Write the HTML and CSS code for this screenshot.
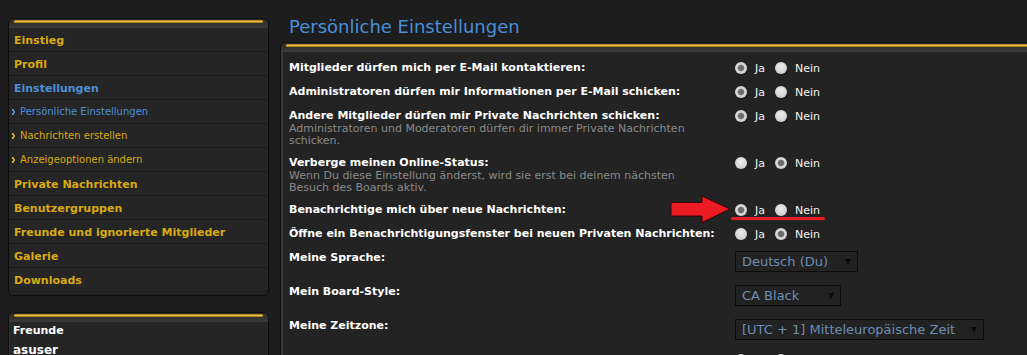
FILE: index.html
```html
<!DOCTYPE html>
<html lang="de">
<head>
<meta charset="utf-8">
<title>Persönliche Einstellungen</title>
<link rel="stylesheet" href="styles.css">
</head>
<body>
<div class="page">
  <aside class="sidebar">
    <div class="panel">
      <div class="panel-head"><div class="gold"></div></div>
      <ul class="menu">
        <li class="item">Einstieg</li>
        <li class="item">Profil</li>
        <li class="item active">Einstellungen</li>
        <li class="sub active"><span class="bullet"></span>Persönliche Einstellungen</li>
        <li class="sub"><span class="bullet"></span>Nachrichten erstellen</li>
        <li class="sub"><span class="bullet"></span>Anzeigeoptionen ändern</li>
        <li class="item">Private Nachrichten</li>
        <li class="item">Benutzergruppen</li>
        <li class="item">Freunde und ignorierte Mitglieder</li>
        <li class="item">Galerie</li>
        <li class="item">Downloads</li>
      </ul>
    </div>
    <div class="panel friends">
      <div class="panel-head"><div class="gold"></div></div>
      <div class="friends-body">
        <div class="friends-title">Freunde</div>
        <div class="friends-user">asuser</div>
      </div>
    </div>
  </aside>

  <main class="content">
    <h2 class="title">Persönliche Einstellungen</h2>
    <div class="panel main-panel">
      <div class="panel-head"><div class="gold"></div></div>
      <div class="rows">
        <div class="row">
          <div class="label"><span class="name">Mitglieder dürfen mich per E-Mail kontaktieren:</span></div>
          <div class="ctrl"><span class="radio checked"></span><span class="opt">Ja</span><span class="radio"></span><span class="opt">Nein</span></div>
        </div>
        <div class="row">
          <div class="label"><span class="name">Administratoren dürfen mir Informationen per E-Mail schicken:</span></div>
          <div class="ctrl"><span class="radio checked"></span><span class="opt">Ja</span><span class="radio"></span><span class="opt">Nein</span></div>
        </div>
        <div class="row">
          <div class="label"><span class="name">Andere Mitglieder dürfen mir Private Nachrichten schicken:</span><span class="desc">Administratoren und Moderatoren dürfen dir immer Private Nachrichten schicken.</span></div>
          <div class="ctrl"><span class="radio checked"></span><span class="opt">Ja</span><span class="radio"></span><span class="opt">Nein</span></div>
        </div>
        <div class="row">
          <div class="label"><span class="name">Verberge meinen Online-Status:</span><span class="desc">Wenn Du diese Einstellung änderst, wird sie erst bei deinem nächsten Besuch des Boards aktiv.</span></div>
          <div class="ctrl"><span class="radio"></span><span class="opt">Ja</span><span class="radio checked"></span><span class="opt">Nein</span></div>
        </div>
        <div class="row">
          <div class="label"><span class="name">Benachrichtige mich über neue Nachrichten:</span></div>
          <div class="ctrl"><span class="radio checked"></span><span class="opt">Ja</span><span class="radio"></span><span class="opt">Nein</span></div>
        </div>
        <div class="row">
          <div class="label"><span class="name">Öffne ein Benachrichtigungsfenster bei neuen Privaten Nachrichten:</span></div>
          <div class="ctrl"><span class="radio"></span><span class="opt">Ja</span><span class="radio checked"></span><span class="opt">Nein</span></div>
        </div>
        <div class="row">
          <div class="label"><span class="name">Meine Sprache:</span></div>
          <div class="ctrl"><div class="select w-lang"><span>Deutsch (Du)</span><span class="caret"></span></div></div>
        </div>
        <div class="row">
          <div class="label"><span class="name">Mein Board-Style:</span></div>
          <div class="ctrl"><div class="select w-style"><span>CA Black</span><span class="caret"></span></div></div>
        </div>
        <div class="row">
          <div class="label"><span class="name">Meine Zeitzone:</span></div>
          <div class="ctrl"><div class="select w-tz"><span>[UTC + 1] Mitteleuropäische Zeit</span><span class="caret"></span></div></div>
        </div>
        <div class="row">
          <div class="label"><span class="name">Derzeit gilt Sommerzeit:</span></div>
          <div class="ctrl"><span class="radio checked"></span><span class="opt">Ja</span><span class="radio"></span><span class="opt">Nein</span></div>
        </div>
      </div>
    </div>
  </main>

  <svg class="arrow" width="62" height="30" viewBox="0 0 62 30" aria-hidden="true">
    <path d="M1 7.5 H32 V1 L60 14 L32 27.5 V21 H1 Z" fill="#ec1c24" stroke="#3a0000" stroke-width="1"/>
  </svg>
  <div class="underline"></div>
</div>
</body>
</html>
```

FILE: styles.css
```css
html, body {
  margin: 0;
  padding: 0;
  overflow: hidden;
  background: #1d1d1d;
}

body {
  font-family: "DejaVu Sans", "Liberation Sans", sans-serif;
  font-size: 11px;
  color: #f2f2f2;
}

.page {
  position: relative;
  display: flex;
  align-items: flex-start;
  gap: 11px;
  width: 1060px;
  padding: 16px 0 0 8px;
  box-sizing: border-box;
}

/* panels */
.panel {
  flex: none;
  background: #252525;
  border: 1px solid #0c0c0c;
  border-radius: 6px;
  overflow: hidden;
  box-shadow: inset 1px 0 0 #333;
}

.panel-head {
  height: 9px;
  padding: 1px 5px 0;
  box-sizing: border-box;
  background: linear-gradient(#2c2c2c, #3a3a3a);
}

.gold {
  height: 3px;
  border-radius: 2px;
  background: linear-gradient(#7a5808, #f6cc4a 40%, #d9a622 70%, #6e5008);
}

/* sidebar */
.sidebar {
  width: 261px;
  flex: none;
  margin-top: 2px;
  display: flex;
  flex-direction: column;
  gap: 16px;
}

.menu {
  list-style: none;
  margin: 0;
  padding: 0 0 3px;
  background: #252525;
}

.menu li {
  height: 23px;
  line-height: 25px;
  border-bottom: 1px solid #1a1a1a;
  white-space: nowrap;
}

.item {
  padding-left: 5px;
  font-weight: bold;
  font-size: 11px;
  color: #d8aa12;
}

.sub {
  padding-left: 3px;
  font-size: 10px;
  color: #d8aa12;
  display: flex;
  align-items: center;
}

.item.active,
.sub.active {
  color: #4d8fd8;
}

.bullet {
  display: inline-block;
  width: 2px;
  height: 2px;
  margin: 0 6px 3px 0;
  background: currentColor;
  box-shadow: 1px 2px 0 currentColor, 0 4px 0 currentColor;
}

.friends-body {
  padding: 1px 4px 0;
  height: 40px;
}

.friends-title {
  font-weight: bold;
  line-height: 16px;
  color: #fff;
}

.friends-user {
  font-weight: bold;
  font-size: 12px;
  line-height: 22px;
  color: #fff;
}

/* main */
.content {
  flex: 1;
  display: flex;
  flex-direction: column;
}

.title {
  margin: 0 0 4px;
  padding-left: 9px;
  font-size: 18px;
  font-weight: normal;
  line-height: 22px;
  color: #4a8fd8;
}

.main-panel {
  height: 320px;
  border-radius: 6px 0 0 0;
  background: #232323;
  box-shadow: inset 2px 0 0 #363636;
}

.rows {
  padding: 4px 0 0 8px;
}

.row {
  display: flex;
  align-items: flex-start;
  padding: 4px 0;
}

.label {
  width: 446px;
  flex: none;
  line-height: 15px;
}

.name {
  display: block;
  font-weight: bold;
  color: #fff;
}

.desc {
  display: block;
  max-width: 408px;
  line-height: 12px;
  color: #8a8a8a;
}

.ctrl {
  display: flex;
  align-items: center;
  min-height: 16px;
}

.radio {
  width: 12px;
  height: 12px;
  border-radius: 50%;
  box-sizing: border-box;
  background: radial-gradient(circle at 50% 40%, #ececec, #d2d2d2 70%, #b9b9b9);
  margin-right: 8px;
}

.radio.checked {
  background:
    radial-gradient(circle, #6c6c6c 0 2.6px, #9a9a9a 3.2px, #dcdcdc 3.8px, #d0d0d0 70%, #b5b5b5);
}

.opt {
  color: #f4f4f4;
  margin-right: 10px;
}

.select {
  display: flex;
  align-items: center;
  justify-content: space-between;
  height: 21px;
  box-sizing: border-box;
  margin: 1px 0 4px;
  padding: 0 6px 0 6px;
  border: 1px solid #0b0b0b;
  background: #222;
  font-size: 13px;
  color: #6e8db3;
  white-space: nowrap;
}

.w-lang { width: 123px; }
.w-style { width: 106px; }
.w-tz { width: 249px; }

.caret {
  width: 0;
  height: 0;
  border-left: 3px solid transparent;
  border-right: 3px solid transparent;
  border-top: 6px solid #0a0a0a;
  margin-top: 1px;
}

/* annotation overlays */
.arrow {
  position: absolute;
  left: 670px;
  top: 195px;
}

.underline {
  position: absolute;
  left: 731px;
  top: 217px;
  width: 94px;
  height: 3px;
  border-radius: 2px;
  background: #e81e26;
}
```
